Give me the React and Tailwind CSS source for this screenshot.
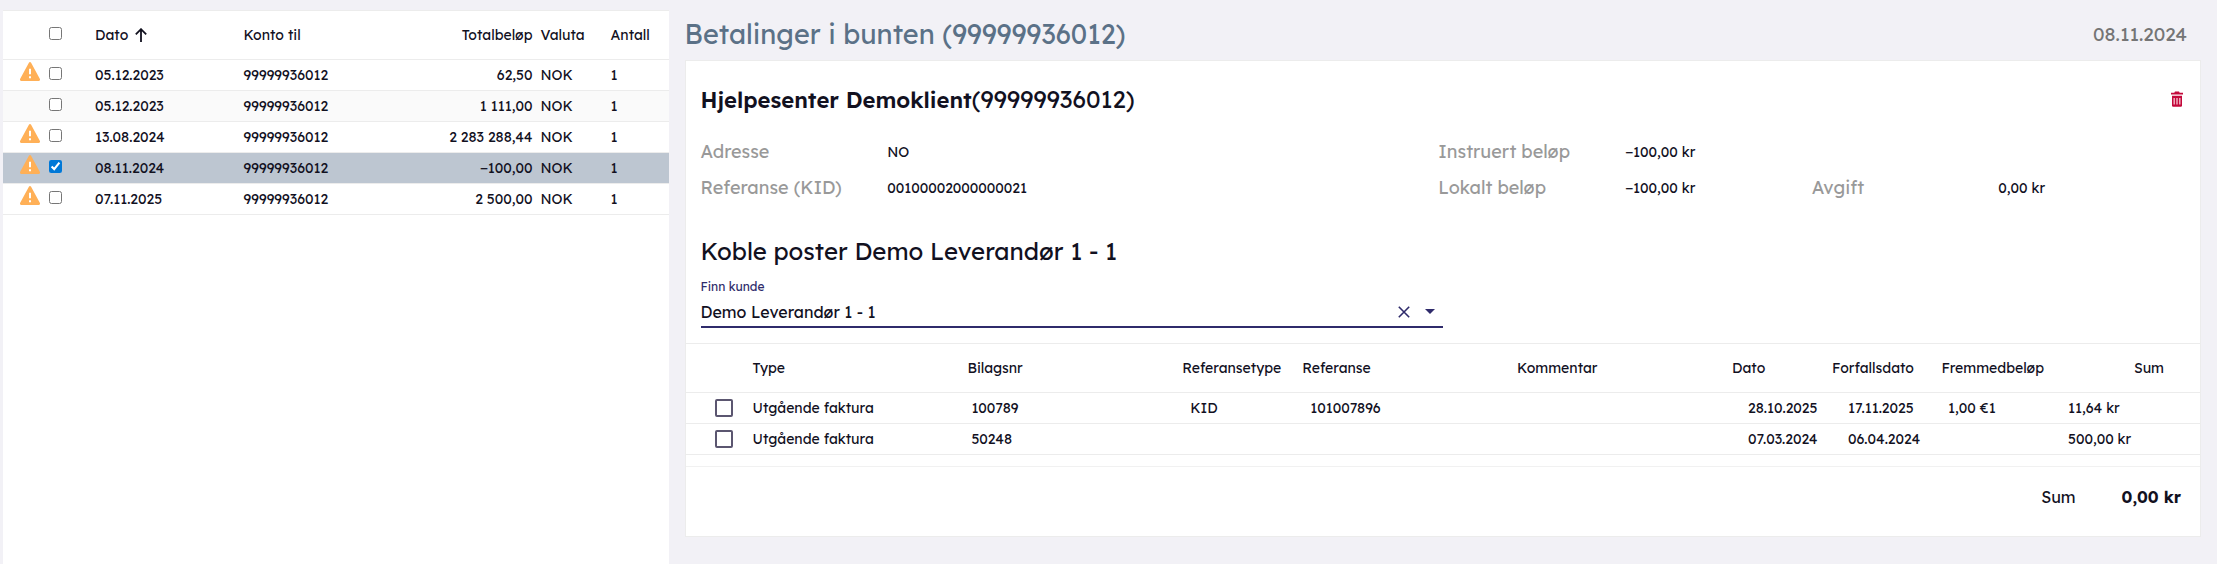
import { useState } from "react";

const payments = [
  { id: 1, warning: true, date: "05.12.2023", account: "99999936012", total: "62,50" },
  { id: 2, warning: false, date: "05.12.2023", account: "99999936012", total: "1 111,00" },
  { id: 3, warning: true, date: "13.08.2024", account: "99999936012", total: "2 283 288,44" },
  { id: 4, warning: true, date: "08.11.2024", account: "99999936012", total: "−100,00" },
  { id: 5, warning: true, date: "07.11.2025", account: "99999936012", total: "2 500,00" },
];

const entries = [
  {
    id: "100789",
    type: "Utgående faktura",
    refType: "KID",
    ref: "101007896",
    date: "28.10.2025",
    due: "17.11.2025",
    foreign: "1,00 €1",
    sum: "11,64 kr",
  },
  {
    id: "50248",
    type: "Utgående faktura",
    refType: "",
    ref: "",
    date: "07.03.2024",
    due: "06.04.2024",
    foreign: "",
    sum: "500,00 kr",
  },
];

function WarningIcon() {
  return (
    <svg width="20" height="19" viewBox="0 0 20 19" role="img" aria-label="Advarsel">
      <path
        d="M8.9.7a1.3 1.3 0 0 1 2.2 0l8.7 16.1a1.4 1.4 0 0 1-1.2 2.2H1.4a1.4 1.4 0 0 1-1.2-2.2z"
        fill="#ffb057"
      />
      <path d="M9 6.8h2v5.4H9zM9 14.2h2v2H9z" fill="#fff" />
    </svg>
  );
}

function SortIcon() {
  return (
    <svg width="12" height="14" viewBox="0 0 12 14" fill="none" stroke="currentColor" strokeWidth="1.8">
      <path d="M6 14V1.2M.8 6.4L6 1.200l5.200 5.200" />
    </svg>
  );
}

function TrashIcon() {
  return (
    <svg width="14" height="16" viewBox="0 0 14 16">
      <path d="M5 .5h4l.7 1.2H13v1.8H1V1.7h3.3z" fill="#c3093b" />
      <path d="M2 4.800h10v9.700a1.200 1.200 0 0 1-1.200 1.200H3.200A1.200 1.200 0 0 1 2 14.500z" fill="#c3093b" />
      <path d="M4.200 7v6.500M7 7v6.500M9.800 7v6.500" stroke="#f3b9c8" strokeWidth="1.4" />
    </svg>
  );
}

function PaymentRow({ payment, checked, onToggle }) {
  return (
    <tr
      className={`h-[31px] border-b border-[#ececec] ${
        checked ? "bg-[#bdc6d1]" : "even:bg-[#fafafa]"
      }`}
    >
      <td className="pb-[6px] pr-[6px]">
        <div className="flex justify-end">{payment.warning && <WarningIcon />}</div>
      </td>
      <td className="pb-[2px] pl-[3px]">
        <input
          type="checkbox"
          aria-label={`Velg betaling ${payment.date}`}
          className="block size-[13px] accent-[#0078d7]"
          checked={checked}
          onChange={onToggle}
        />
      </td>
      <td className="px-1">{payment.date}</td>
      <td className="px-1">{payment.account}</td>
      <td className="px-1 text-right">{payment.total}</td>
      <td className="px-1">NOK</td>
      <td className="px-1">1</td>
    </tr>
  );
}

function PaymentList() {
  const [selected, setSelected] = useState([4]);

  const toggle = (id) =>
    setSelected((s) => (s.includes(id) ? s.filter((x) => x !== id) : [...s, id]));

  const toggleAll = () =>
    setSelected((s) => (s.length === payments.length ? [] : payments.map((p) => p.id)));

  return (
    <section className="min-w-0 flex-305 border-t border-[#ececec] bg-white">
      <table className="w-full table-fixed text-left text-sm">
        <thead>
          <tr className="h-12 border-b border-[#ececec]">
            <th className="w-[43px]" />
            <th className="w-[45px] pb-[2px] pl-[3px]">
              <input
                type="checkbox"
                aria-label="Velg alle"
                className="block size-[13px]"
                checked={selected.length === payments.length}
                onChange={toggleAll}
              />
            </th>
            <th className="px-1 font-normal">
              <button type="button" className="flex items-center gap-[7px]">
                Dato <SortIcon />
              </button>
            </th>
            <th className="px-1 font-normal">Konto til</th>
            <th className="px-1 text-right font-normal">Totalbeløp</th>
            <th className="w-[70px] px-1 font-normal">Valuta</th>
            <th className="w-[62px] px-1 font-normal">Antall</th>
          </tr>
        </thead>
        <tbody>
          {payments.map((p) => (
            <PaymentRow
              key={p.id}
              payment={p}
              checked={selected.includes(p.id)}
              onToggle={() => toggle(p.id)}
            />
          ))}
        </tbody>
      </table>
    </section>
  );
}

function Label({ children }) {
  return <dt className="text-lg/9 text-[#999]">{children}</dt>;
}

function Details() {
  return (
    <dl className="mt-[19px] grid grid-cols-[187fr_552fr_187fr_187fr_187fr_187fr] text-sm/9">
      <Label>Adresse</Label>
      <dd>NO</dd>
      <Label>Instruert beløp</Label>
      <dd className="col-span-3">−100,00 kr</dd>
      <Label>Referanse (KID)</Label>
      <dd>00100002000000021</dd>
      <Label>Lokalt beløp</Label>
      <dd>−100,00 kr</dd>
      <Label>Avgift</Label>
      <dd>0,00 kr</dd>
    </dl>
  );
}

function CustomerPicker() {
  const [value, setValue] = useState("Demo Leverandør 1 - 1");
  return (
    <div className="mt-[10px] w-1/2">
      <label htmlFor="customer" className="block text-xs/5 text-[#2f2b6b]">
        Finn kunde
      </label>
      <div className="flex h-[31px] items-center gap-2 border-b-2 border-[#2f2b6b] pr-1 text-[#2f2b6b]">
        <input
          id="customer"
          type="text"
          className="min-w-0 flex-1 text-base text-[#12111f] outline-none"
          value={value}
          onChange={(e) => setValue(e.target.value)}
        />
        <button type="button" aria-label="Tøm" className="p-[3px]" onClick={() => setValue("")}>
          <svg width="12" height="12" viewBox="0 0 12 12" stroke="currentColor" strokeWidth="1.6">
            <path d="M.8.8l10.400 10.400M11.200.8L.8 11.200" />
          </svg>
        </button>
        <button type="button" aria-label="Vis kunder" className="p-1">
          <svg width="10" height="5" viewBox="0 0 10 5" fill="currentColor">
            <path d="M0 0h10L5 5z" />
          </svg>
        </button>
      </div>
    </div>
  );
}

function EntryTable() {
  return (
    <table className="mt-[15px] w-full table-fixed text-left text-sm">
      <thead>
        <tr className="h-[49px] border-y border-[#ececec]">
          <th className="w-[63px]" />
          <th className="px-1 font-normal">Type</th>
          <th className="px-1 font-normal">Bilagsnr</th>
          <th className="w-[120px] px-1 font-normal">Referansetype</th>
          <th className="px-1 font-normal">Referanse</th>
          <th className="px-1 font-normal">Kommentar</th>
          <th className="w-[100px] px-1 font-normal">Dato</th>
          <th className="w-[100px] px-1 font-normal">Forfallsdato</th>
          <th className="w-[120px] px-1 text-right font-normal">Fremmedbeløp</th>
          <th className="w-[120px] px-1 text-right font-normal">Sum</th>
          <th className="w-8" />
        </tr>
      </thead>
      <tbody>
        {entries.map((e) => (
          <tr key={e.id} className="h-[31px] border-b border-[#ececec]">
            <td className="pl-[29px]">
              <input
                type="checkbox"
                aria-label={`Velg bilag ${e.id}`}
                className="block size-[18px] appearance-none rounded-[2px] border-2 border-[#5b5670] checked:bg-[#5b5670]"
              />
            </td>
            <td className="px-1">{e.type}</td>
            <td className="px-2">{e.id}</td>
            <td className="px-3">{e.refType}</td>
            <td className="px-3">{e.ref}</td>
            <td />
            <td className="pl-5">{e.date}</td>
            <td className="pl-5">{e.due}</td>
            <td className="pl-5">{e.foreign}</td>
            <td className="pl-5">{e.sum}</td>
            <td />
          </tr>
        ))}
      </tbody>
    </table>
  );
}

export default function App() {
  return (
    <div className="flex min-h-screen gap-4 bg-[#f2f1f6] pl-[3px] pr-4 pt-[10px] font-['Lexend','Noto_Sans',sans-serif] text-[#12111f]">
      <PaymentList />

      <main className="min-w-0 flex-695">
        <header className="flex h-[50px] items-center justify-between pb-[2px] pr-[14px]">
          <h1 className="text-[27px] text-[#5b7187]">Betalinger i bunten (99999936012)</h1>
          <span className="text-[19px] text-[#757575]">08.11.2024</span>
        </header>

        <section className="border border-[#ececec] bg-white">
          <div className="px-[15px] pt-[22px]">
            <div className="flex items-center justify-between">
              <h2 className="text-2xl">
                <strong className="text-[22px] font-semibold">Hjelpesenter Demoklient</strong>
                (99999936012)
              </h2>
              <button type="button" aria-label="Slett" className="mr-px">
                <TrashIcon />
              </button>
            </div>
            <Details />
            <h2 className="mt-[29px] text-2xl">Koble poster Demo Leverandør 1 - 1</h2>
            <CustomerPicker />
          </div>

          <EntryTable />

          <div className="mt-[11px] flex h-[70px] items-center justify-end gap-[46px] border-t border-[#f1f1f1] pb-[10px] pr-[19px]">
            <span>Sum</span>
            <strong className="font-bold">0,00 kr</strong>
          </div>
        </section>
      </main>
    </div>
  );
}
